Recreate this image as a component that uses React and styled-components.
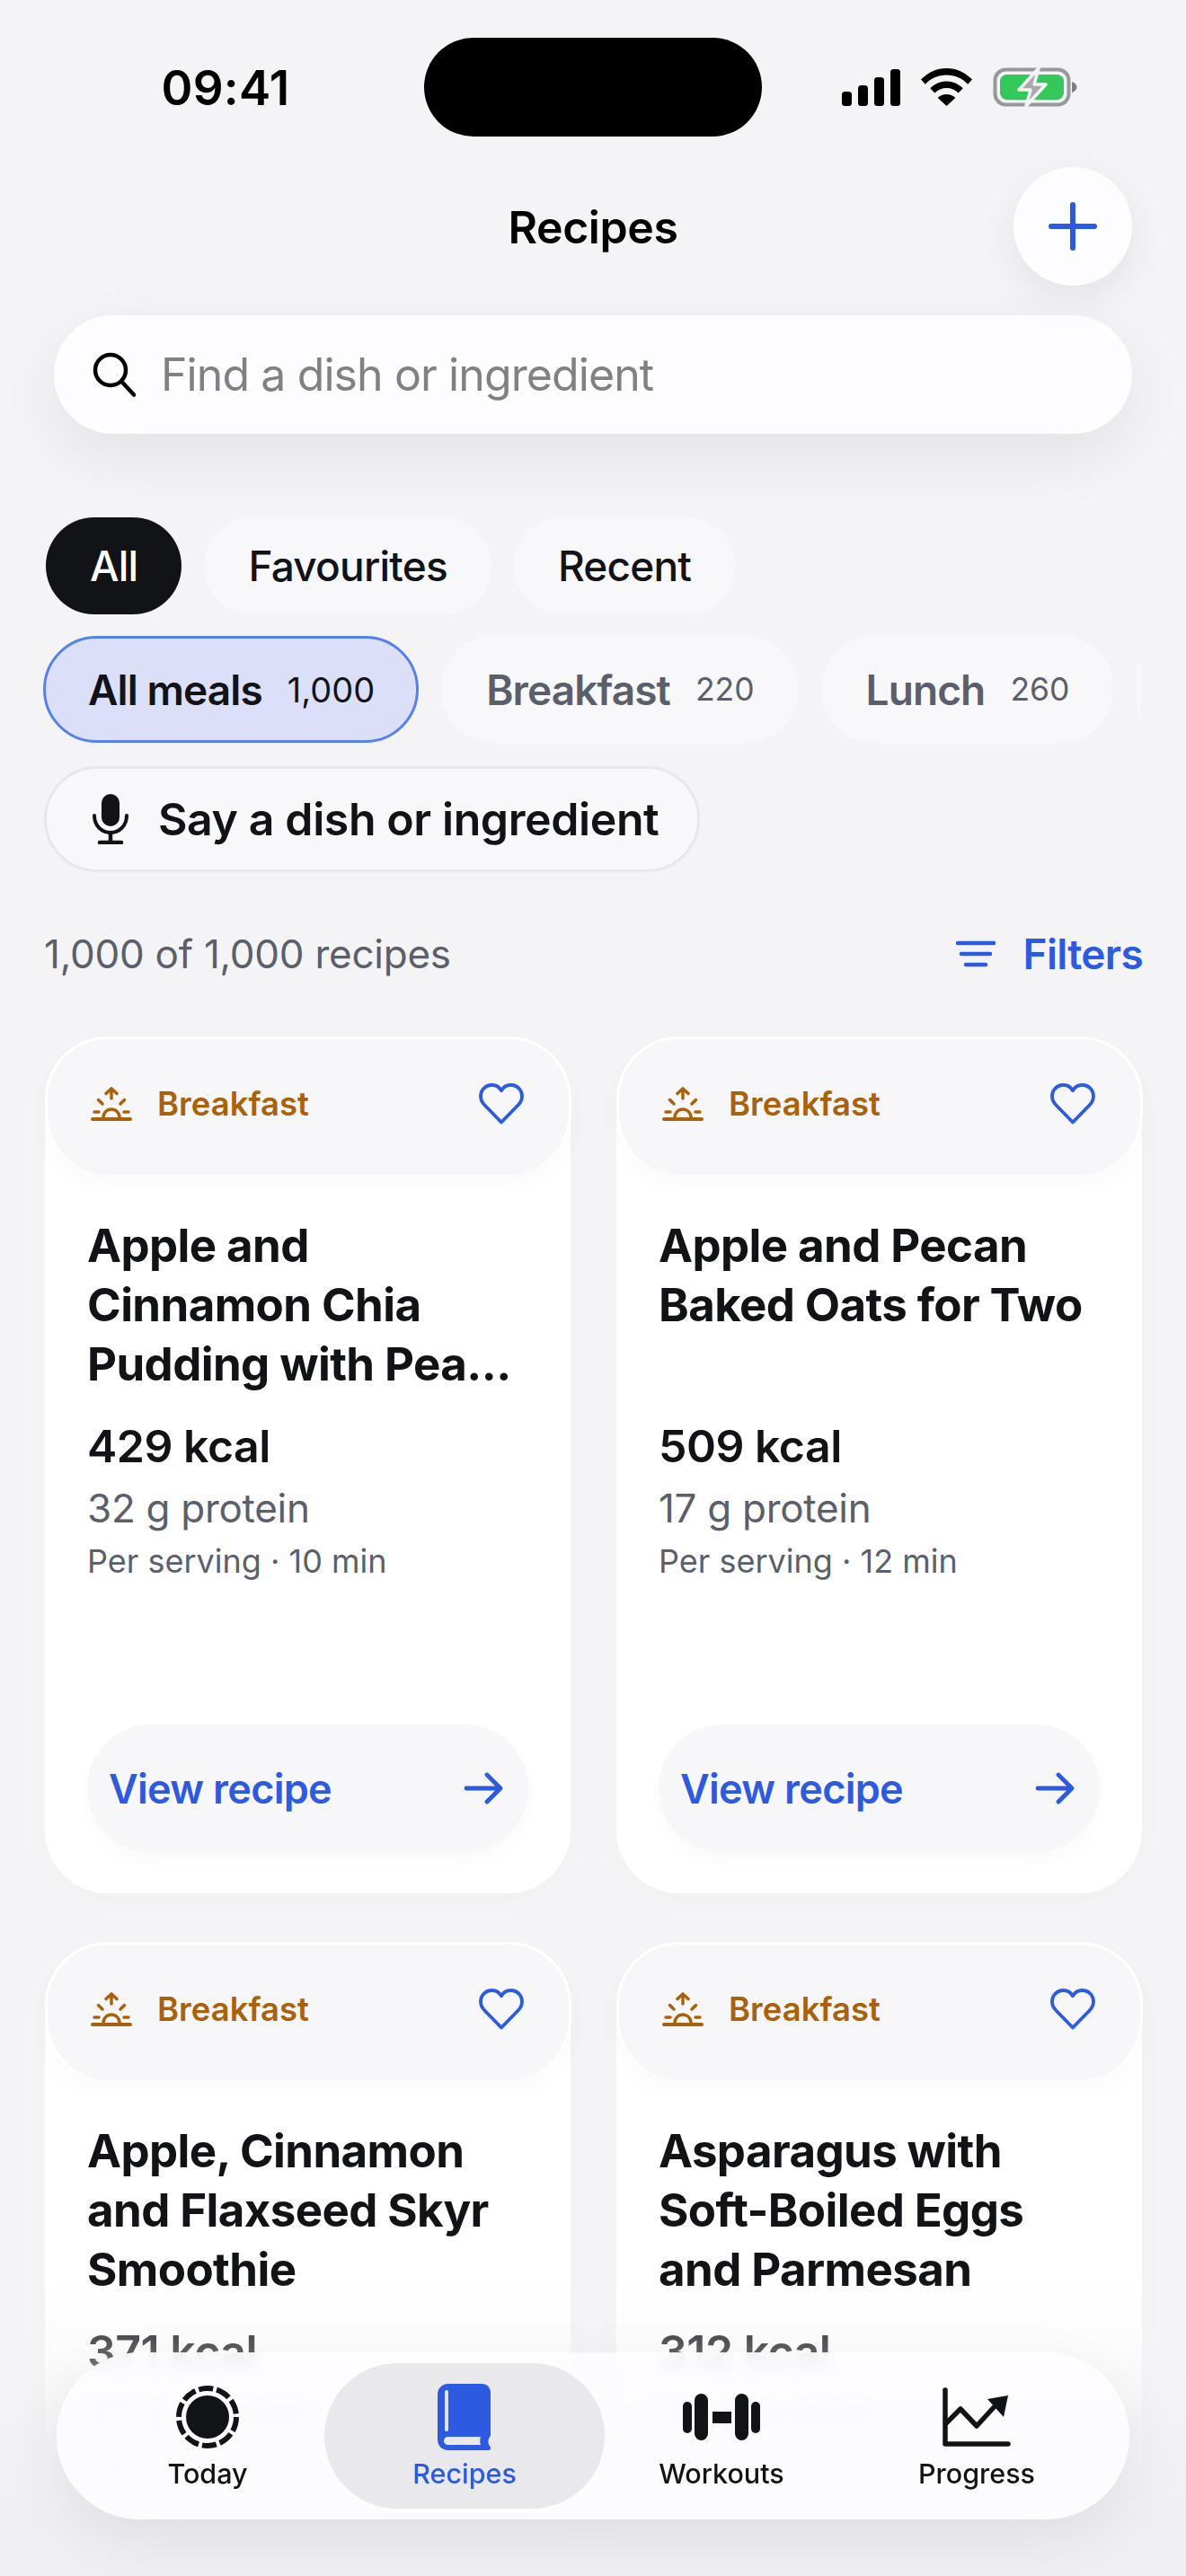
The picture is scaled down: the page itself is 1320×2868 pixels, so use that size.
import React from "react";
import styled, { createGlobalStyle } from "styled-components";

const Global = createGlobalStyle`
  html, body { margin: 0; padding: 0; background: #f4f4f6; }
  * { box-sizing: border-box; }
  body { font-family: Inter, "Noto Sans", "Liberation Sans", sans-serif; -webkit-font-smoothing: antialiased; }
`;

const Screen = styled.div`
  position: relative; width: 1320px; height: 2868px; overflow: hidden; background: #f4f4f6; color: #121317;
`;
const StatusBar = styled.div`
  display: grid; grid-template-columns: 472px 376px 472px; height: 110px; margin-top: 42px; align-items: center;
`;
const Time = styled.div`
  font-size: 53px; font-weight: 600; color: #000; text-align: center; padding-left: 30px; line-height: 1; padding-top: 2px; letter-spacing: 0.2px;
`;
const Island = styled.div`width: 376px; height: 110px; border-radius: 55px; background: #000;`;
const StatusIcons = styled.div`display: flex; align-items: center; gap: 23px; padding-left: 89px;`;

const Header = styled.div`
  display: grid; grid-template-columns: 132px 1fr 132px; align-items: center; margin: 34px 60px 0; height: 132px;
`;
const Title = styled.h1`
  grid-column: 2; margin: 0; padding-top: 2px; text-align: center; font-size: 50px; font-weight: 600; color: #000; letter-spacing: -0.4px;
`;
const RoundBtn = styled.button`
  grid-column: 3; width: 132px; height: 132px; border: 0; border-radius: 50%; background: #fdfdff; padding: 0;
  display: flex; align-items: center; justify-content: center; box-shadow: 0 14px 44px rgba(20, 20, 40, 0.07);
`;
const Search = styled.div`
  display: flex; align-items: center; gap: 28px; height: 132px; margin: 33px 60px 0; padding-left: 43px; border-radius: 66px;
  background: #fdfdff; box-shadow: 0 24px 70px rgba(20, 20, 40, 0.07);
`;
const Placeholder = styled.span`font-size: 50px; color: #808085; letter-spacing: -0.9px;`;

const ScopeRow = styled.div`display: flex; gap: 25px; margin: 93px 0 0 51px;`;
const Scope = styled.div`
  height: 108px; padding: 0 49px; border-radius: 54px; display: flex; align-items: center; font-size: 46px; font-weight: 500; letter-spacing: -0.8px;
  background: ${p => (p.$on ? "#121317" : "#f8f8fa")}; color: ${p => (p.$on ? "#fff" : "#121317")};
`;
const CategoryRow = styled.div`display: flex; gap: 25px; margin: 24px 50px 0 48px; overflow: hidden;`;
const Category = styled.div`
  flex: none; height: 119px; padding: 0 46px 0 47px; border-radius: 60px; display: flex; align-items: center; gap: 28px;
  background: ${p => (p.$on ? "#dbe0f8" : "#f8f8fa")}; border: 3px solid ${p => (p.$on ? "#5580f0" : "#f8f8fa")};
  color: ${p => (p.$on ? "#121317" : "#5b5f6b")};
  font-size: 46px; font-weight: 600; letter-spacing: -0.9px;
`;
const CategoryCount = styled.span`font-size: ${p => (p.$on ? 38 : 35.5)}px; font-weight: 400; letter-spacing: 0;`;
const VoiceBtn = styled.div`
  display: inline-flex; align-items: center; gap: 33px; height: 118px; margin: 26px 0 0 49px; padding: 0 43px 0 51px; border-radius: 59px;
  background: #f8f8fa; border: 3px solid #e8e8ea; font-size: 50px; font-weight: 600; color: #121317; letter-spacing: -0.4px;
`;
const CountRow = styled.div`
  display: flex; align-items: center; justify-content: space-between; height: 60px; margin: 61px 48px 0 49px;
`;
const CountText = styled.span`font-size: 44px; color: #5b5f6b; letter-spacing: -0.25px;`;
const FiltersBtn = styled.span`
  display: flex; align-items: center; gap: 31px; font-size: 46px; font-weight: 600; color: #2c5ae0; letter-spacing: -0.7px;
`;
const Grid = styled.div`
  display: grid; grid-template-columns: 585px 585px; column-gap: 51px; row-gap: 54px; margin: 62px 0 0 50px;
`;
const Card = styled.article`
  height: 954px; border-radius: 70px; background: #fff; display: flex; flex-direction: column;
  box-shadow: 0 10px 40px rgba(20, 20, 40, 0.015);
`;
const CardTop = styled.div`
  display: flex; align-items: center; justify-content: space-between; height: 154px; padding: 0 50px 8px 48px; border-radius: 70px;
  background: #f7f7fa; border: 3px solid #fff; border-bottom: 0; box-shadow: 0 12px 24px rgba(20, 20, 60, 0.02); margin-right: -1px;
`;
const Tag = styled.div`display: flex; align-items: center; gap: 28px; font-size: 36.5px; font-weight: 600; color: #a8620a;`;
const CardBody = styled.div`flex: 1; display: flex; flex-direction: column; padding: 46px 47px 46px;`;
const CardTitle = styled.h2`
  margin: 0; height: 198px; font-size: 51px; line-height: 66px; font-weight: 700; color: #121317; letter-spacing: -0.6px;
`;
const Kcal = styled.div`margin-top: 28px; font-size: 50px; line-height: 60px; font-weight: 600; color: #121317; letter-spacing: -0.5px;`;
const Protein = styled.div`margin-top: 11px; font-size: 44px; line-height: 56px; color: #5b5f6b; letter-spacing: -0.3px;`;
const Meta = styled.div`margin-top: 7px; font-size: 36px; line-height: 48px; color: #5b5f6b;`;
const ViewBtn = styled.div`
  margin-top: auto; height: 142px; border-radius: 71px; background: #f7f7fa; display: flex; align-items: center; justify-content: space-between;
  padding: 0 28px 0 24px; font-size: 45px; font-weight: 600; color: #2c5ae0; letter-spacing: -0.7px; box-shadow: 0 8px 20px rgba(20, 20, 60, 0.025);
`;
const Fade = styled.div`
  position: absolute; left: 0; right: 0; bottom: 0; height: 330px; pointer-events: none;
  background: linear-gradient(to bottom, rgba(244,244,246,0) 0%, rgba(244,244,246,0.35) 25%, rgba(242,242,244,0.8) 50%, rgba(240,240,242,0.98) 80%, #f0f0f2 100%);
`;
const Nav = styled.nav`
  position: absolute; left: 63px; top: 2619px; width: 1194px; height: 186px; border-radius: 93px; padding: 12px 0;
  background: rgba(253, 253, 255, 0.9); backdrop-filter: blur(7px);
  box-shadow: 0 24px 70px rgba(20, 20, 40, 0.07);
  display: grid; grid-template-columns: 298px 312px 260px 308px;
`;
const NavItem = styled.div`
  display: flex; flex-direction: column; align-items: center; border-radius: 81px; height: 162px;
  background: ${p => (p.$on ? "#e9e9ec" : "transparent")}; color: ${p => (p.$on ? "#2c5ae0" : "#121317")};
  font-size: 30.5px; font-weight: 500; padding-left: ${p => p.$pl || 0}px;
`;
const NavIcon = styled.div`height: 100px; display: flex; align-items: center; justify-content: center; margin-top: 10px;`;
const NavLabel = styled.span`line-height: 36px; margin-top: -5px;`;

const Signal = () => (
  <svg width="65" height="41" viewBox="0 0 65 41" fill="#000">
    <rect x="0" y="25" width="11" height="16" rx="3.5" />
    <rect x="18" y="18" width="11" height="23" rx="3.5" />
    <rect x="36" y="9" width="11" height="32" rx="3.5" />
    <rect x="54" y="0" width="11" height="41" rx="3.5" />
  </svg>
);
const Wifi = () => (
  <svg width="57" height="42" viewBox="0 0 57 42" fill="#000">
    <path d="M28.5 0C17.7 0 8 4.3 0 12.6l4.8 5.2C11 11.3 19.3 7.6 28.5 7.6s17.5 3.7 23.7 10.2l4.8-5.2C49 4.3 39.3 0 28.5 0z" />
    <path d="M28.5 14.5c-7 0-13.3 2.8-18.2 7.8l5 5.2c3.5-3.5 8.1-5.5 13.2-5.5s9.7 2 13.2 5.5l5-5.2c-4.9-5-11.2-7.8-18.2-7.8z" />
    <path d="M28.5 29c-3.8 0-7.2 1.5-9.8 4.1L28.5 42l9.8-8.9C35.7 30.5 32.3 29 28.5 29z" />
  </svg>
);
const Battery = () => (
  <svg width="94" height="46" viewBox="0 0 94 46">
    <rect x="2.5" y="3.5" width="82" height="39" rx="12" fill="none" stroke="#98989c" strokeWidth="4" />
    <rect x="8" y="9" width="71" height="28" rx="7.5" fill="#34c759" />
    <path d="M88 17c3.5 1 5.5 3.5 5.5 6s-2 5-5.5 6z" fill="#7f7f83" />
    <path d="M51 2 29 26h13l-5 18 22-24H46z" fill="#a9a9ad" stroke="#f4f4f6" strokeWidth="3.5" strokeLinejoin="round" />
  </svg>
);
const SearchIcon = () => (
  <svg width="48" height="50" viewBox="0 0 48 50" fill="none" stroke="#000" strokeWidth="4.5" strokeLinecap="round">
    <circle cx="20" cy="20" r="17" />
    <path d="M32.5 33 46 47.5" />
  </svg>
);
const Plus = () => (
  <svg width="54" height="54" viewBox="0 0 54 54" stroke="#2c5ae0" strokeWidth="6" strokeLinecap="round">
    <path d="M27 3v48M3 27h48" />
  </svg>
);
const Mic = () => (
  <svg width="40" height="56" viewBox="0 0 40 56" fill="none">
    <rect x="10" y="0" width="20" height="36" rx="10" fill="#121317" />
    <path d="M2 24c0 11 8 19 18 19s18-8 18-19" stroke="#121317" strokeWidth="4" strokeLinecap="round" />
    <path d="M20 43v10M8 54h24" stroke="#121317" strokeWidth="4.5" strokeLinecap="round" />
  </svg>
);
const FilterIcon = () => (
  <svg width="44" height="30" viewBox="0 0 44 30" stroke="#2c5ae0" strokeWidth="4.5" strokeLinecap="round">
    <path d="M2 3h40M6 15h32M11 27h22" />
  </svg>
);
const Sunrise = () => (
  <svg width="46" height="38" viewBox="0 0 46 38" fill="none" stroke="#a8620a" strokeWidth="3.5" strokeLinecap="round">
    <path d="M2 36h42" strokeWidth="4" />
    <path d="M14 34a9 9 0 0 1 18 0" />
    <path d="M23 13V2M17 7.5 23 2l6 5.5" />
    <path d="M8.5 14.5 13 19M37.5 14.5 33 19M4 28h5M37 28h5" />
  </svg>
);
const Heart = () => (
  <svg width="50" height="46" viewBox="0 0 50 46" fill="none" stroke="#2c5ae0" strokeWidth="3.8" strokeLinejoin="round">
    <path d="M25 43.5 6.5 24.5C3.5 21.5 2 18 2 14.5 2 7.5 7.5 2 14.5 2c4.5 0 8.3 2.3 10.5 6.3C27.2 4.3 31 2 35.5 2 42.5 2 48 7.5 48 14.5c0 3.5-1.500 7-4.500 10z" />
  </svg>
);
const Arrow = () => (
  <svg width="44" height="36" viewBox="0 0 44 36" fill="none" stroke="#2c5ae0" strokeWidth="4.8" strokeLinecap="round" strokeLinejoin="round">
    <path d="M3 18h37M26 3l15 15-15 15" />
  </svg>
);
const TodayIcon = () => (
  <svg width="72" height="72" viewBox="0 0 72 72">
    <circle cx="36" cy="36" r="24" fill="#121317" />
    <circle cx="36" cy="36" r="32" fill="none" stroke="#121317" strokeWidth="6" strokeDasharray="16.1 4" />
  </svg>
);
const BookIcon = () => (
  <svg width="60" height="74" viewBox="0 0 60 74">
    <path d="M12 0h37c6 0 10 4 10 10v48c-3 3-3.5 8-.5 12 1.5 2 0 4-2 4H12C5 74 0 69 0 62V12C0 5 5 0 12 0z" fill="#2c5ae0" />
    <rect x="8" y="7" width="4" height="46" rx="2" fill="#dfe3f5" />
    <path d="M12 59h36c-1 3-1 6 0 9H12c-3 0-5-2-5-4.500S9 59 12 59z" fill="#e9e9ec" />
  </svg>
);
const DumbbellIcon = () => (
  <svg width="86" height="52" viewBox="0 0 86 52" fill="#121317">
    <rect x="0" y="9" width="10" height="35" rx="5" />
    <rect x="13" y="0" width="15" height="52" rx="7.5" />
    <rect x="33" y="20" width="21" height="13" />
    <rect x="58" y="0" width="15" height="52" rx="7.5" />
    <rect x="76" y="9" width="10" height="35" rx="5" />
  </svg>
);
const ChartIcon = () => (
  <svg width="76" height="66" viewBox="0 0 76 66" fill="none" stroke="#121317" strokeWidth="5.5" strokeLinecap="round" strokeLinejoin="round">
    <path d="M3 3v60h70" />
    <path d="M4 40 20 24l18 19 22-24" />
    <path d="M50 13 73 9l-5 24z" fill="#121317" stroke="none" />
  </svg>
);

const recipes = [
  ["Apple and Cinnamon Chia Pudding with Pea...", "429 kcal", "32 g protein", "Per serving · 10 min"],
  ["Apple and Pecan Baked Oats for Two", "509 kcal", "17 g protein", "Per serving · 12 min"],
  ["Apple, Cinnamon and Flaxseed Skyr Smoothie", "371 kcal", "27 g protein", "Per serving · 5 min"],
  ["Asparagus with Soft-Boiled Eggs and Parmesan", "312 kcal", "25 g protein", "Per serving · 10 min"],
];

export default function App() {
  return (
    <Screen>
      <Global />
      <StatusBar>
        <Time>09:41</Time>
        <Island />
        <StatusIcons>
          <Signal />
          <Wifi />
          <Battery />
        </StatusIcons>
      </StatusBar>
      <Header>
        <Title>Recipes</Title>
        <RoundBtn aria-label="Add"><Plus /></RoundBtn>
      </Header>
      <Search>
        <SearchIcon />
        <Placeholder>Find a dish or ingredient</Placeholder>
      </Search>
      <ScopeRow>
        <Scope $on>All</Scope>
        <Scope>Favourites</Scope>
        <Scope>Recent</Scope>
      </ScopeRow>
      <CategoryRow>
        <Category $on>All meals <CategoryCount $on>1,000</CategoryCount></Category>
        <Category>Breakfast <CategoryCount>220</CategoryCount></Category>
        <Category>Lunch <CategoryCount>260</CategoryCount></Category>
        <Category />
      </CategoryRow>
      <VoiceBtn><Mic />Say a dish or ingredient</VoiceBtn>
      <CountRow>
        <CountText>1,000 of 1,000 recipes</CountText>
        <FiltersBtn><FilterIcon />Filters</FiltersBtn>
      </CountRow>
      <Grid>
        {recipes.map(r => (
          <Card key={r[0]}>
            <CardTop>
              <Tag><Sunrise />Breakfast</Tag>
              <Heart />
            </CardTop>
            <CardBody>
              <CardTitle>{r[0]}</CardTitle>
              <Kcal>{r[1]}</Kcal>
              <Protein>{r[2]}</Protein>
              <Meta>{r[3]}</Meta>
              <ViewBtn>View recipe<Arrow /></ViewBtn>
            </CardBody>
          </Card>
        ))}
      </Grid>
      <Fade />
      <Nav>
        <NavItem $pl={38}><NavIcon><TodayIcon /></NavIcon><NavLabel>Today</NavLabel></NavItem>
        <NavItem $on><NavIcon><BookIcon /></NavIcon><NavLabel>Recipes</NavLabel></NavItem>
        <NavItem><NavIcon><DumbbellIcon /></NavIcon><NavLabel>Workouts</NavLabel></NavItem>
        <NavItem><NavIcon><ChartIcon /></NavIcon><NavLabel>Progress</NavLabel></NavItem>
      </Nav>
    </Screen>
  );
}
